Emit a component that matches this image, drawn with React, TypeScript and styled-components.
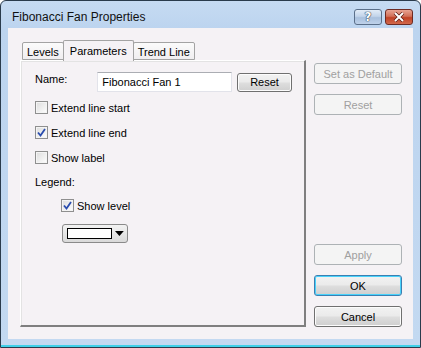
import styled, { createGlobalStyle } from 'styled-components';

const Global = createGlobalStyle`
    html, body {
        margin: 0;
        padding: 0;
        background: #ffffff;
    }
    body {
        font-family: "Liberation Sans", Arial, sans-serif;
        font-size: 11px;
        color: #000000;
    }
`;

const Window = styled.div`
    width: 421px;
    height: 348px;
    box-sizing: border-box;
    border: 1px solid #2a3b4c;
    border-radius: 6px 6px 0 0;
    background: linear-gradient(180deg, #c6dbf2 0px, #bcd4ef 28px, #c3d9f1 100%);
    display: flex;
    flex-direction: column;
    padding: 0 7px 8px 7px;
    box-shadow: inset 0 -2px 0 #3fd0e8;
`;

const TitleBar = styled.div`
    height: 27px;
    display: flex;
    align-items: flex-start;
    padding-left: 4px;
    flex-shrink: 0;
`;

const Title = styled.span`
    flex: 1;
    font-size: 12px;
    padding-top: 9px;
    color: #111111;
`;

const CaptionButton = styled.div<{ close?: boolean }>`
    width: 28px;
    height: 16px;
    margin-left: ${p => (p.close ? 3 : 0)}px;
    margin-top: 8px;
    border: 1px solid ${p => (p.close ? '#6d2a22' : '#5a6f89')};
    border-radius: 3px;
    background: ${p =>
        p.close
            ? 'linear-gradient(180deg, #e8a493 0%, #d16f58 45%, #c04125 55%, #d2694c 100%)'
            : 'linear-gradient(180deg, #e2ecf7 0%, #c2d4ea 45%, #a9c0dd 55%, #bfd2ea 100%)'};
    display: flex;
    align-items: center;
    justify-content: center;
    box-sizing: border-box;
`;

const HelpMark = styled.span`
    font-family: "DejaVu Sans", sans-serif;
    font-weight: bold;
    font-size: 12px;
    color: #ffffff;
    text-shadow: 0 0 1px #2c3e57, 0 0 1px #2c3e57, 0 0 1px #2c3e57;
    line-height: 1;
`;

const Client = styled.div`
    flex: 1;
    background: #f5f2f5;
    display: flex;
    gap: 8px;
    padding: 12px 11px 12px 12px;
`;

const LeftColumn = styled.div`
    width: 286px;
    display: flex;
    flex-direction: column;
`;

const TabStrip = styled.div`
    display: flex;
    align-items: flex-end;
    height: 20px;
    padding-left: 2px;
    position: relative;
    z-index: 1;
`;

const Tab = styled.div<{ active?: boolean }>`
    height: ${p => (p.active ? 21 : 18)}px;
    padding: 0 ${p => (p.active ? 6 : 4)}px;
    margin: 0 ${p => (p.active ? -1 : 0)}px ${p => (p.active ? -1 : 0)}px;
    box-sizing: border-box;
    border: 1px solid #a3a3a3;
    border-bottom: ${p => (p.active ? 'none' : '1px solid #a3a3a3')};
    border-radius: 2px 2px 0 0;
    background: ${p => (p.active ? '#f5f2f5' : 'linear-gradient(180deg, #fbfbfb, #f0eef0)')};
    display: flex;
    align-items: center;
    padding-top: ${p => (p.active ? 0 : 2)}px;
    position: relative;
    z-index: ${p => (p.active ? 2 : 1)};
`;

const Panel = styled.div`
    flex: 1;
    box-sizing: border-box;
    border: 1px solid #d9d9d9;
    border-top-color: #ffffff;
    border-left-color: #ffffff;
    border-right: 2px solid #7f7f7f;
    border-bottom: 2px solid #7f7f7f;
    box-shadow: inset 1px 1px 0 #e3e3e3;
    padding: 11px 12px 0 14px;
    display: flex;
    flex-direction: column;
`;

const NameRow = styled.div`
    display: flex;
    align-items: center;
    height: 20px;
    margin-bottom: 9px;
`;

const NameLabel = styled.span`
    width: 63px;
    margin-top: -6px;
`;

const TextInput = styled.div`
    width: 136px;
    height: 20px;
    box-sizing: border-box;
    border: 1px solid #e2e3ea;
    border-top-color: #abadb3;
    background: #ffffff;
    padding: 3px 0 0 4px;
`;

const Button = styled.div<{ disabled?: boolean; primary?: boolean; w?: number; h?: number }>`
    width: ${p => p.w ?? 88}px;
    height: ${p => p.h ?? 21}px;
    box-sizing: border-box;
    border: 1px solid ${p => (p.disabled ? '#adb2b5' : p.primary ? '#3c7fb1' : '#707070')};
    border-radius: 3px;
    background: ${p =>
        p.disabled
            ? '#f4f4f4'
            : 'linear-gradient(180deg, #f2f2f2 0%, #ebebeb 45%, #dddddd 55%, #cfcfcf 100%)'};
    color: ${p => (p.disabled ? '#a0a0a0' : '#000000')};
    box-shadow: ${p => (p.disabled ? 'none' : p.primary ? 'inset 0 0 0 1px #48d2fb' : 'inset 0 0 0 1px #fcfcfc')};
    display: flex;
    align-items: center;
    justify-content: center;
    flex-shrink: 0;
`;

const CheckRow = styled.div<{ indent?: number }>`
    display: flex;
    align-items: center;
    gap: 3px;
    height: 13px;
    margin-left: ${p => p.indent ?? 0}px;
    margin-bottom: 12px;
`;

const Box = styled.div`
    width: 13px;
    height: 13px;
    box-sizing: border-box;
    border: 1px solid #8f8f8f;
    background: linear-gradient(135deg, #dcdcdc 0%, #f4f4f4 70%, #ffffff 100%);
    box-shadow: inset 0 0 0 1px #f4f4f4;
    display: flex;
    align-items: center;
    justify-content: center;
`;

const Legend = styled.div`
    margin: 0 0 11px 0;
`;

const ColorPicker = styled.div`
    margin-left: 27px;
    width: 66px;
    height: 19px;
    box-sizing: border-box;
    border: 1px solid #8a8a8a;
    border-radius: 3px;
    background: linear-gradient(180deg, #f3f3f3 0%, #e6e6e6 50%, #d9d9d9 100%);
    display: flex;
    align-items: center;
    padding: 0 3px 0 4px;
    gap: 3px;
`;

const Swatch = styled.div<{ color: string }>`
    width: 46px;
    height: 11px;
    box-sizing: border-box;
    border: 1px solid #000000;
    background: ${p => p.color};
`;

const RightColumn = styled.div`
    width: 88px;
    display: flex;
    flex-direction: column;
    padding-top: 23px;
    gap: 10px;
`;

const Spacer = styled.div`
    flex: 1;
`;

function Check({ checked }: { checked?: boolean }) {
    return (
        <Box>
            {checked && (
                <svg width="9" height="9" viewBox="0 0 9 9">
                    <path d="M1 4.5 L3.5 7.5 L8 1" stroke="#2a4cae" strokeWidth="1.8" fill="none" />
                </svg>
            )}
        </Box>
    );
}

export default function App() {
    return (
        <>
            <Global />
            <Window>
                <TitleBar>
                    <Title>Fibonacci Fan Properties</Title>
                    <CaptionButton>
                        <HelpMark>?</HelpMark>
                    </CaptionButton>
                    <CaptionButton close>
                        <svg width="12" height="10" viewBox="0 0 12 10">
                            <path d="M2 1 L10 9 M10 1 L2 9" stroke="#5a1a12" strokeWidth="3.4" />
                            <path d="M2 1 L10 9 M10 1 L2 9" stroke="#ffffff" strokeWidth="2" />
                        </svg>
                    </CaptionButton>
                </TitleBar>
                <Client>
                    <LeftColumn>
                        <TabStrip>
                            <Tab>Levels</Tab>
                            <Tab active>Parameters</Tab>
                            <Tab>Trend Line</Tab>
                        </TabStrip>
                        <Panel>
                            <NameRow>
                                <NameLabel>Name:</NameLabel>
                                <TextInput>Fibonacci Fan 1</TextInput>
                                <Button w={55} h={19} style={{ marginLeft: 5 }}>Reset</Button>
                            </NameRow>
                            <CheckRow>
                                <Check />
                                <span>Extend line start</span>
                            </CheckRow>
                            <CheckRow>
                                <Check checked />
                                <span>Extend line end</span>
                            </CheckRow>
                            <CheckRow>
                                <Check />
                                <span>Show label</span>
                            </CheckRow>
                            <Legend>Legend:</Legend>
                            <CheckRow indent={26}>
                                <Check checked />
                                <span>Show level</span>
                            </CheckRow>
                            <ColorPicker>
                                <Swatch color="#ffffff" />
                                <svg width="9" height="5" viewBox="0 0 9 5">
                                    <path d="M0 0 L9 0 L4.5 5 Z" fill="#000000" />
                                </svg>
                            </ColorPicker>
                        </Panel>
                    </LeftColumn>
                    <RightColumn>
                        <Button disabled>Set as Default</Button>
                        <Button disabled>Reset</Button>
                        <Spacer />
                        <Button disabled>Apply</Button>
                        <Button primary>OK</Button>
                        <Button>Cancel</Button>
                    </RightColumn>
                </Client>
            </Window>
        </>
    );
}
